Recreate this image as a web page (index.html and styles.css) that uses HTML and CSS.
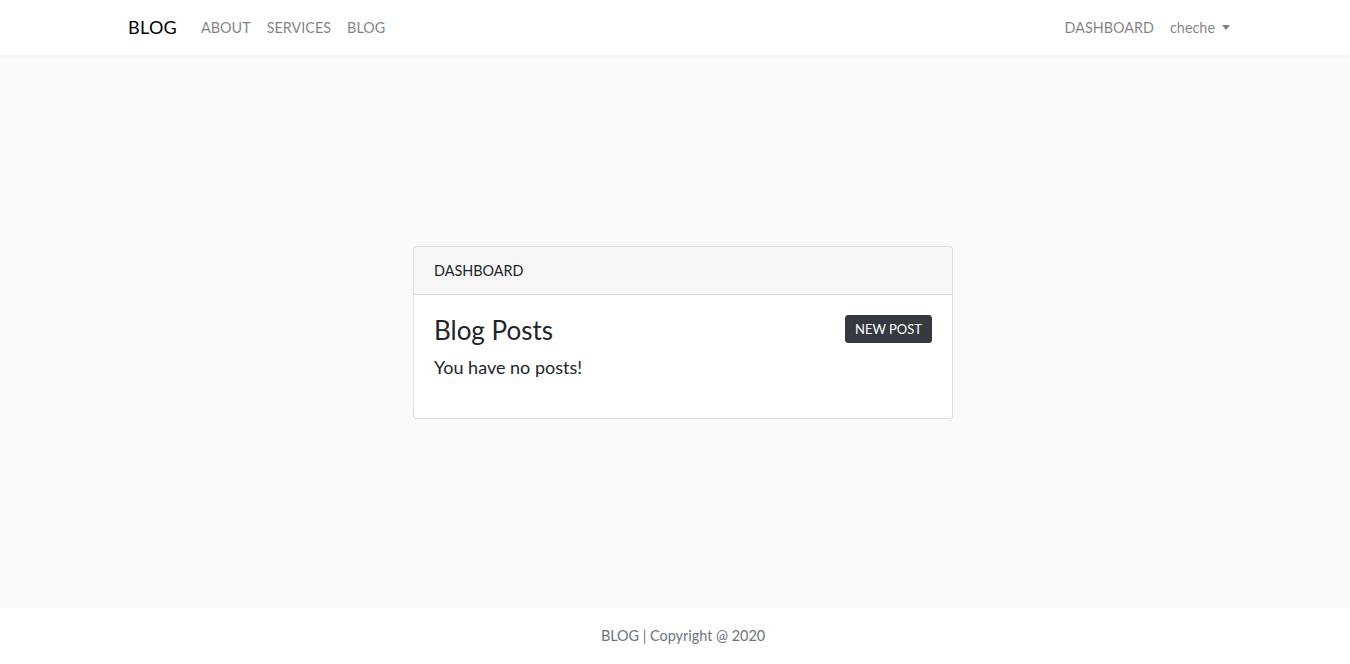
FILE: index.html
```html
<!DOCTYPE html>
<html lang="en">
<head>
<meta charset="utf-8">
<title>BLOG</title>
<link rel="stylesheet" href="styles.css">
</head>
<body>
<nav class="navbar">
  <div class="nav-inner">
    <a class="brand" href="#">BLOG</a>
    <ul class="nav-list">
      <li><a class="nav-link" href="#">ABOUT</a></li>
      <li><a class="nav-link" href="#">SERVICES</a></li>
      <li><a class="nav-link" href="#">BLOG</a></li>
    </ul>
    <ul class="nav-list nav-right">
      <li><a class="nav-link" href="#">DASHBOARD</a></li>
      <li><a class="nav-link dropdown" href="#">cheche<span class="caret"></span></a></li>
    </ul>
  </div>
</nav>
<main class="main">
  <div class="card">
    <div class="card-header">DASHBOARD</div>
    <div class="card-body">
      <div class="card-top">
        <h3 class="title">Blog Posts</h3>
        <a class="btn" href="#">NEW POST</a>
      </div>
      <h5 class="empty">You have no posts!</h5>
    </div>
  </div>
</main>
<footer class="footer">BLOG | Copyright @ 2020</footer>
</body>
</html>
```
FILE: styles.css
```css
* { box-sizing: border-box; }
html, body { margin: 0; padding: 0; }
body {
  font-family: Lato, "Noto Sans", sans-serif;
  font-size: 14.4px;
  line-height: 1.6;
  color: #212529;
  background: #f8fafc;
  min-height: 100vh;
  display: flex;
  flex-direction: column;
}
a { text-decoration: none; }
.navbar {
  background: #fff;
  height: 55px;
  box-shadow: 0 2px 4px rgba(0,0,0,.04);
  position: relative;
  z-index: 1;
  padding-left: 16px;
}
.nav-inner {
  width: 1110px;
  margin: 0 auto;
  height: 100%;
  display: flex;
  align-items: center;
}
.brand {
  color: #000;
  font-size: 18px;
  margin-right: 16px;
  letter-spacing: 0.3px;
}
.nav-list {
  list-style: none;
  margin: 0;
  padding: 0;
  display: flex;
}
.nav-right { margin-left: auto; }
.nav-link {
  display: block;
  padding: 8px;
  color: rgba(0,0,0,.5);
}
.caret {
  display: inline-block;
  margin-left: 7px;
  vertical-align: 3px;
  border-top: 5px solid rgba(0,0,0,.5);
  border-left: 4.5px solid transparent;
  border-right: 4.5px solid transparent;
}
.main {
  flex: 1;
  display: flex;
  align-items: center;
  justify-content: center;
  padding-left: 16px;
  padding-top: 2px;
}
.card {
  width: 540px;
  background: #fff;
  border: 1px solid rgba(0,0,0,.125);
  border-radius: 4px;
}
.card-header {
  background: rgba(0,0,0,.03);
  border-bottom: 1px solid rgba(0,0,0,.125);
  padding: 12px 20px;
  height: 48px;
  line-height: 23px;
}
.card-body {
  padding: 20px 20px 40px;
}
.card-top {
  display: flex;
  justify-content: space-between;
  align-items: flex-start;
}
.title {
  margin: 0 0 11px;
  font-size: 26px;
  font-weight: 400;
  line-height: 1.2;
}
.btn {
  background: #343a40;
  color: #fff;
  font-size: 13px;
  line-height: 1.45;
  padding: 4px 9px;
  border-radius: 3px;
  border: 1px solid #343a40;
}
.empty {
  margin: 0;
  font-size: 18px;
  font-weight: 400;
  line-height: 1.2;
}
.footer {
  background: #fff;
  height: 56px;
  display: flex;
  align-items: center;
  justify-content: center;
  color: #6c757d;
  padding-left: 16px;
}
```
